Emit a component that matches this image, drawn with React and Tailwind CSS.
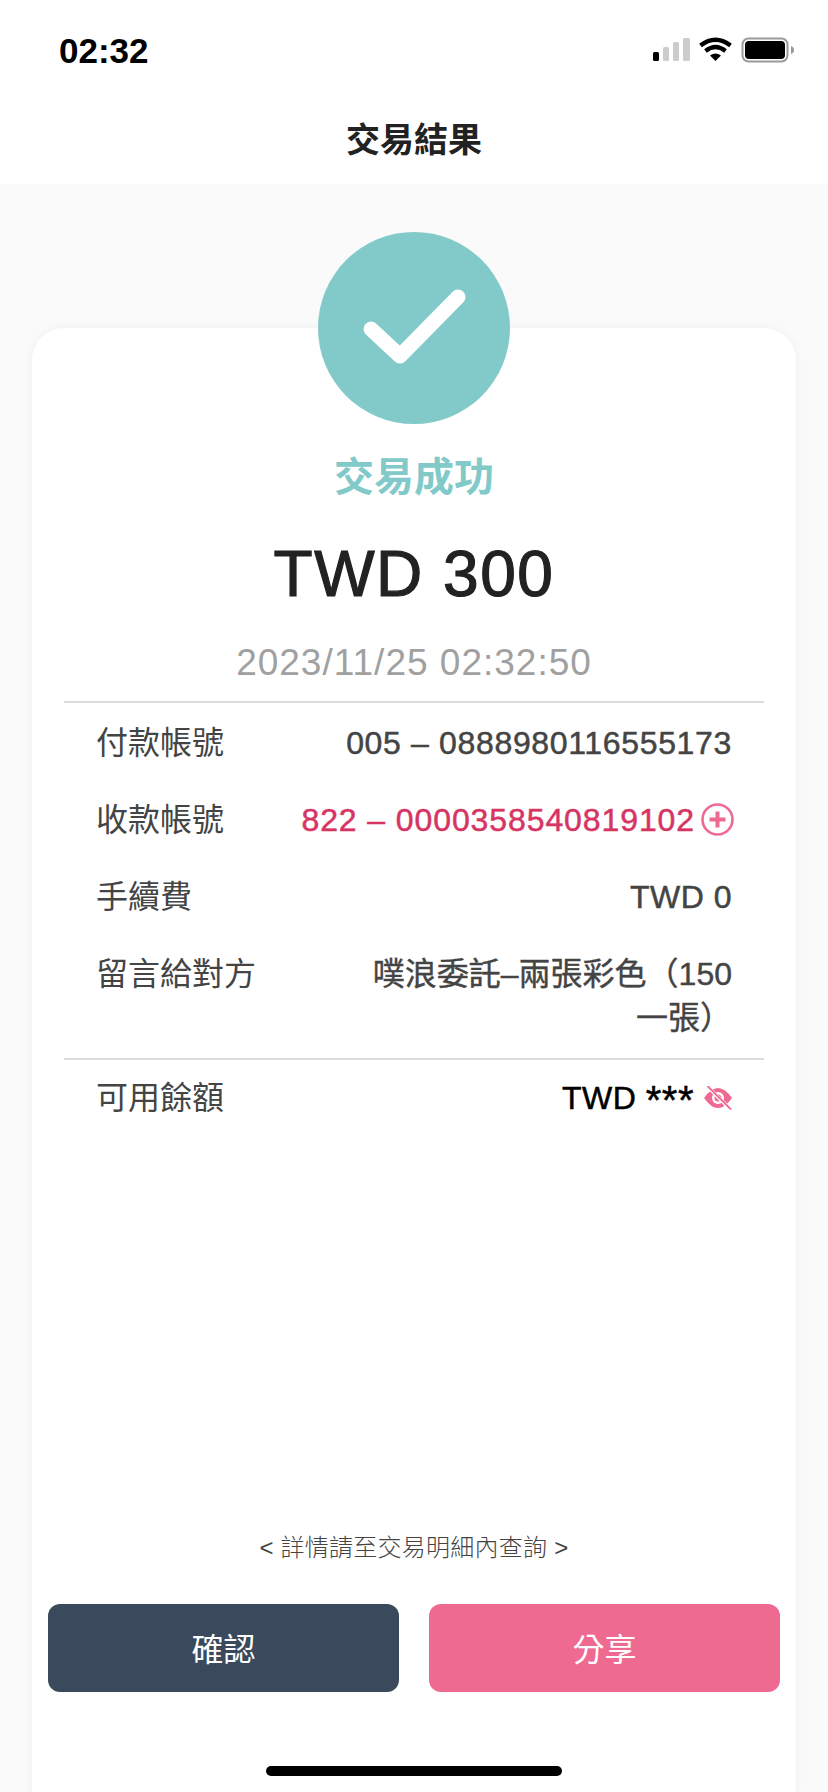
export default function App() {
  return (
    <div className="relative flex h-[1792px] w-[828px] flex-col overflow-hidden bg-[#fafafa] font-['Liberation_Sans','Noto_Sans_CJK_TC',sans-serif] text-[32px] text-[#444444]">
      <header className="h-[184px] shrink-0 bg-white">
        <div className="flex h-[100px] items-center justify-between pl-[59px] pr-[34px]">
          <span className="text-[35px] font-bold leading-none text-black">02:32</span>
          <svg width="141" height="26" viewBox="0 0 141 26">
            <rect x="0" y="15" width="6" height="9" rx="1.5" fill="#000" />
            <rect x="10" y="10" width="6" height="14" rx="1.5" fill="#ccc" />
            <rect x="20" y="5" width="6" height="19" rx="1.5" fill="#ccc" />
            <rect x="30" y="1" width="7" height="23" rx="1.5" fill="#ccc" />
            <path d="M47.5 8.5 Q62.5 -3 77.5 8.5" fill="none" stroke="#000" strokeWidth="4.4" />
            <path d="M52.5 14 Q62.5 6 72.5 14" fill="none" stroke="#000" strokeWidth="4.2" />
            <path d="M57 18.5 Q62.5 14.5 68 18.5 L62.5 24 Z" fill="#000" />
            <rect x="89.5" y="1.5" width="45" height="23" rx="6" fill="none" stroke="#9a9a9a" strokeWidth="2" />
            <rect x="92" y="4" width="40" height="18" rx="4" fill="#000" />
            <path d="M138 9 Q141 10 141 13 Q141 16 138 17 Z" fill="#9a9a9a" />
          </svg>
        </div>
        <h1 className="text-center text-[34px] font-bold leading-[80px] text-[#222222]">交易結果</h1>
      </header>

      <main className="mx-[32px] mt-[144px] flex flex-1 flex-col rounded-t-[32px] bg-white shadow-[0_0_8px_rgba(0,0,0,0.05)]">
        <div className="relative -mt-[96px] flex h-[192px] w-[192px] shrink-0 items-center justify-center self-center rounded-full bg-[#82caca]">
          <svg width="192" height="192" viewBox="0 0 192 192">
            <path d="M53 97 L82 124 L140 65" fill="none" stroke="#fff" strokeWidth="15" strokeLinecap="round" strokeLinejoin="round" />
          </svg>
        </div>
        <div className="mt-[28px] text-center text-[40px] font-bold leading-[50px] text-[#82caca]">交易成功</div>
        <div className="mt-[32px] text-center text-[64px] leading-[80px] tracking-[1.5px] text-[#222222] [-webkit-text-stroke:1.2px_#222222]">TWD 300</div>
        <div className="mt-[24px] text-center text-[37px] leading-[50px] tracking-[1px] text-[#a0a0a0]">2023/11/25 02:32:50</div>

        <div className="mx-[32px] mt-[13px] border-t-2 border-[#dcdcdc] pt-[1px]">
          <div className="flex h-[77px] items-center justify-between pl-[32px] pr-[32px]">
            <span>付款帳號</span>
            <span className="tracking-[0.66px] [-webkit-text-stroke:0.5px_#444444]">005 – 0888980116555173</span>
          </div>
          <div className="flex h-[77px] items-center justify-between pl-[32px] pr-[30px]">
            <span>收款帳號</span>
            <span className="flex items-center gap-[6px] text-[#d63564]">
              <span className="tracking-[0.9px] [-webkit-text-stroke:0.5px_#d63564]">822 – 0000358540819102</span>
              <svg width="33" height="33" viewBox="0 0 33 33">
                <circle cx="16.5" cy="16.5" r="15" fill="none" stroke="#ee6a90" strokeWidth="2.6" />
                <path d="M8.5 16.5 H24.5 M16.5 8.5 V24.5" stroke="#ee6a90" strokeWidth="4" />
              </svg>
            </span>
          </div>
          <div className="flex h-[77px] items-center justify-between pl-[32px] pr-[32px]">
            <span>手續費</span>
            <span className="tracking-[0.5px] [-webkit-text-stroke:0.5px_#444444]">TWD 0</span>
          </div>
          <div className="flex items-start justify-between pl-[32px] pr-[32px] pt-[17px] pb-[18px]">
            <span className="shrink-0 leading-[44px]">留言給對方</span>
            <span className="w-[368px] text-right leading-[44px] [-webkit-text-stroke:0.4px_#444444]">噗浪委託–兩張彩色（150 一張）</span>
          </div>
        </div>

        <div className="mx-[32px] border-t-2 border-[#dcdcdc]">
          <div className="flex h-[75px] items-center justify-between pl-[32px] pr-[32px]">
            <span>可用餘額</span>
            <span className="flex items-center gap-[10px] text-black">
              <span className="tracking-[0.5px] [-webkit-text-stroke:0.5px_#000000]">
                TWD <span className="align-[-5px] text-[40px] leading-none">***</span>
              </span>
              <svg width="28" height="24" viewBox="0 0 28 24">
                <path fill="#ee6a90" d="M0 12 Q14 -8 28 12 Q14 32 0 12 Z" />
                <circle cx="14" cy="12" r="6" fill="#fff" />
                <circle cx="14" cy="12" r="3.5" fill="#ee6a90" />
                <path d="M4 1 L26 23" stroke="#fff" strokeWidth="3.5" />
                <path d="M3.5 0 L27 23.5" stroke="#ee6a90" strokeWidth="1.8" />
              </svg>
            </span>
          </div>
        </div>

        <div className="flex-1" />
        <div className="text-center text-[24px] font-light leading-[32px] tracking-[0.25px] text-[#444444]">&lt; 詳情請至交易明細內查詢 &gt;</div>
        <div className="mt-[40px] mb-[100px] flex gap-[30px] px-[16px]">
          <button className="h-[88px] flex-1 rounded-[12px] bg-[#3a4a5c] pt-[4px] text-[32px] text-white">確認</button>
          <button className="h-[88px] flex-1 rounded-[12px] bg-[#ee6a90] pt-[4px] text-[32px] text-white">分享</button>
        </div>
      </main>

      <div className="absolute bottom-[16px] left-[266px] h-[10px] w-[296px] rounded-full bg-black" />
    </div>
  );
}
